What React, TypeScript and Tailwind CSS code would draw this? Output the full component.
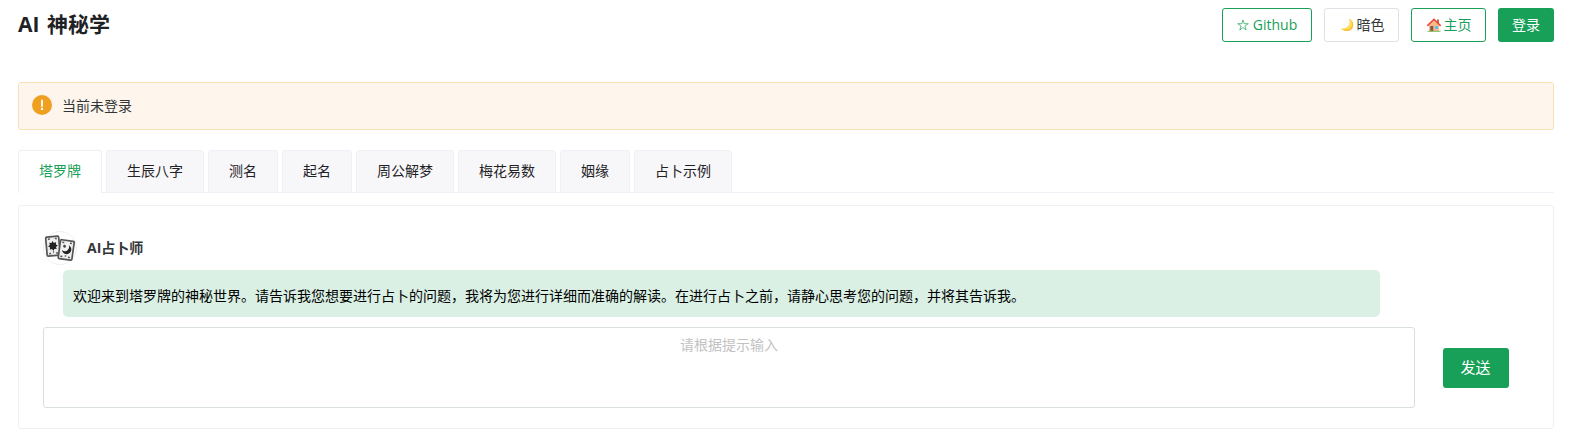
import React from 'react';

const tabs = ['塔罗牌', '生辰八字', '测名', '起名', '周公解梦', '梅花易数', '姻缘', '占卜示例'];

function Star() {
  return (
    <svg width="12" height="12" viewBox="0 0 12 12" fill="none" stroke="#18a058" strokeWidth="0.7" strokeLinejoin="round">
      <path d="M6 1 7.100 4.700H11.300L7.900 7 9.200 11 6 8.500 2.800 11 4.100 7 .7 4.700H4.900Z" />
    </svg>
  );
}

function Moon() {
  return (
    <svg width="14" height="14" viewBox="0 0 14 14">
      <path d="M9 .8C12.500 2 14.200 5.600 12.900 9.200 11.300 13.400 5.200 14.600 .8 10.800 5 11.200 8 9.500 9.200 6.600 10 4.500 9.900 2.400 9 .8Z" fill="#fcc52f" />
      <path d="M9.300 1.200C11.900 3 12.500 5.800 11.300 8.200 9.800 11 6.500 11.800 1.500 11 5 11.300 8.200 9.700 9.400 6.800 10.200 4.700 10.100 2.800 9.300 1.200Z" fill="#ffe168" />
    </svg>
  );
}

function House() {
  return (
    <svg width="14" height="14" viewBox="0 0 14 14">
      <path d="M10 1.500h2v4h-2Z" fill="#b9705a" />
      <path d="M2 7 7 2.200 12 7V13.300H2Z" fill="#fbb988" />
      <path d="M3.300 8H6.300v5.300h-3Z" fill="#8b5745" />
      <path d="M8 8h3v3H8Z" fill="#5fc0f5" />
      <path d="M.8 7.400 7 1.300l6.200 6.100" fill="none" stroke="#ea4335" strokeWidth="1.500" strokeLinecap="round" />
      <path d="M.5 12.800h13v1H.5Z" fill="#7cbb5c" />
    </svg>
  );
}

function TarotAvatar() {
  return (
    <svg width="34" height="34" viewBox="0 0 34 34" className="block">
      <circle cx="17" cy="17" r="16.500" fill="#fff" stroke="#e8e8e8" strokeWidth="0.700" />
      <g transform="rotate(-5 10 15)">
        <rect x="3.400" y="5.600" width="13" height="19" rx="1.200" fill="#eeeeee" stroke="#555" strokeWidth="1.700" />
        <path d="m10 10 1.200 2 2.300-.6-.6 2.300 2 1.200-2 1.300.6 2.200-2.300-.5-1.200 2-1.300-2-2.200.5.5-2.200-2-1.300 2-1.200-.5-2.300 2.200.6Z" fill="#222" />
        <circle cx="10" cy="15" r="3" fill="#222" />
        <path d="M5.500 7.800h2M12.500 7.800h2M5.500 22.300h2M12.500 22.300h2M9.500 21h1" stroke="#555" strokeWidth="1.500" />
      </g>
      <g transform="rotate(8 23 19)">
        <rect x="16.300" y="9.400" width="13.800" height="19" rx="1.200" fill="#f1f1f1" stroke="#555" strokeWidth="1.700" />
        <path d="M25.200 14a4.700 4.700 0 1 1-6.200 5.600 4.300 4.300 0 0 0 6.200-5.600Z" fill="#222" />
        <circle cx="21" cy="15.500" r="1.400" fill="#444" />
        <path d="M18.300 11.800h2M26 11.800h2M18.300 26h2M26 26h2M22.500 25h1.500" stroke="#555" strokeWidth="1.500" />
      </g>
    </svg>
  );
}

export default function App() {
  return (
    <div className="h-[441px] overflow-hidden bg-white pt-2 pr-[23px] pl-[18px] font-['Open_Sans','Noto_Sans_CJK_SC',sans-serif] text-sm text-[#1f2225]">
      <header className="flex h-[34px] items-center justify-between">
        <h1 className="pb-0.5 text-[21px] leading-8 font-bold [word-spacing:2px]">AI 神秘学</h1>
        <div className="flex h-[34px] gap-3">
          <button className="flex w-[90px] items-center justify-center gap-1 rounded-[3px] border border-[#18a058] text-[#18a058]">
            <Star />
            <span>Github</span>
          </button>
          <button className="flex w-[75px] items-center justify-center gap-[3px] rounded-[3px] border border-[#e0e0e6] pl-px text-[#333639]">
            <Moon />
            <span>暗色</span>
          </button>
          <button className="flex w-[75px] items-center justify-center gap-[3px] rounded-[3px] border border-[#18a058] pl-px text-[#18a058]">
            <House />
            <span>主页</span>
          </button>
          <button className="w-14 rounded-[3px] bg-[#18a058] text-white">登录</button>
        </div>
      </header>

      <div className="mt-10 flex h-12 items-center rounded-[3px] border border-[#fae0b5] bg-[#fef6ed] pl-[13px] text-[#333639]">
        <svg width="20" height="20" viewBox="0 0 20 20" className="mb-0.5">
          <circle cx="10" cy="10" r="10" fill="#f0a020" />
          <path d="M10 5.500v5.500" stroke="#fff" strokeWidth="1.800" strokeLinecap="round" />
          <circle cx="10" cy="13.900" r="1.200" fill="#fff" />
        </svg>
        <span className="ml-2.5">当前未登录</span>
      </div>

      <nav className="mt-5 flex h-[43px]">
        {tabs.map((tab, i) => (
          <React.Fragment key={tab}>
            <button
              className={
                i === 0
                  ? 'rounded-t-[3px] border border-b-0 border-[#efeff5] px-5 pb-[3px] text-[#18a058]'
                  : 'rounded-t-[3px] border border-[#efeff5] bg-[#f7f7fa] px-5 pb-0.5'
              }
            >
              {tab}
            </button>
            {i < tabs.length - 1 && <span className="w-1 border-b border-[#efeff5]" />}
          </React.Fragment>
        ))}
        <span className="flex-1 border-b border-[#efeff5]" />
      </nav>

      <main className="mt-3 h-[224px] rounded-[3px] border border-[#efeff5] pt-[25px] pl-6">
        <div className="flex h-[34px] items-center">
          <TarotAvatar />
          <span className="ml-2.5 font-bold text-[#333639]">AI占卜师</span>
        </div>
        <div className="mt-[5px] ml-5 flex h-[47px] w-[1317px] items-center rounded-[5px] bg-[#daf0e4] px-2.5 pt-1 text-black">
          欢迎来到塔罗牌的神秘世界。请告诉我您想要进行占卜的问题，我将为您进行详细而准确的解读。在进行占卜之前，请静心思考您的问题，并将其告诉我。
        </div>
        <div className="mt-2.5 flex items-center">
          <div className="h-[81px] w-[1372px] rounded-[3px] border border-[#d8dfde] pt-1.5 text-center leading-[22px] text-[#c2c2c2]">
            请根据提示输入
          </div>
          <button className="ml-7 h-10 w-[66px] rounded-[3px] bg-[#18a058] pr-px text-[15px] text-white">发送</button>
        </div>
      </main>
    </div>
  );
}
